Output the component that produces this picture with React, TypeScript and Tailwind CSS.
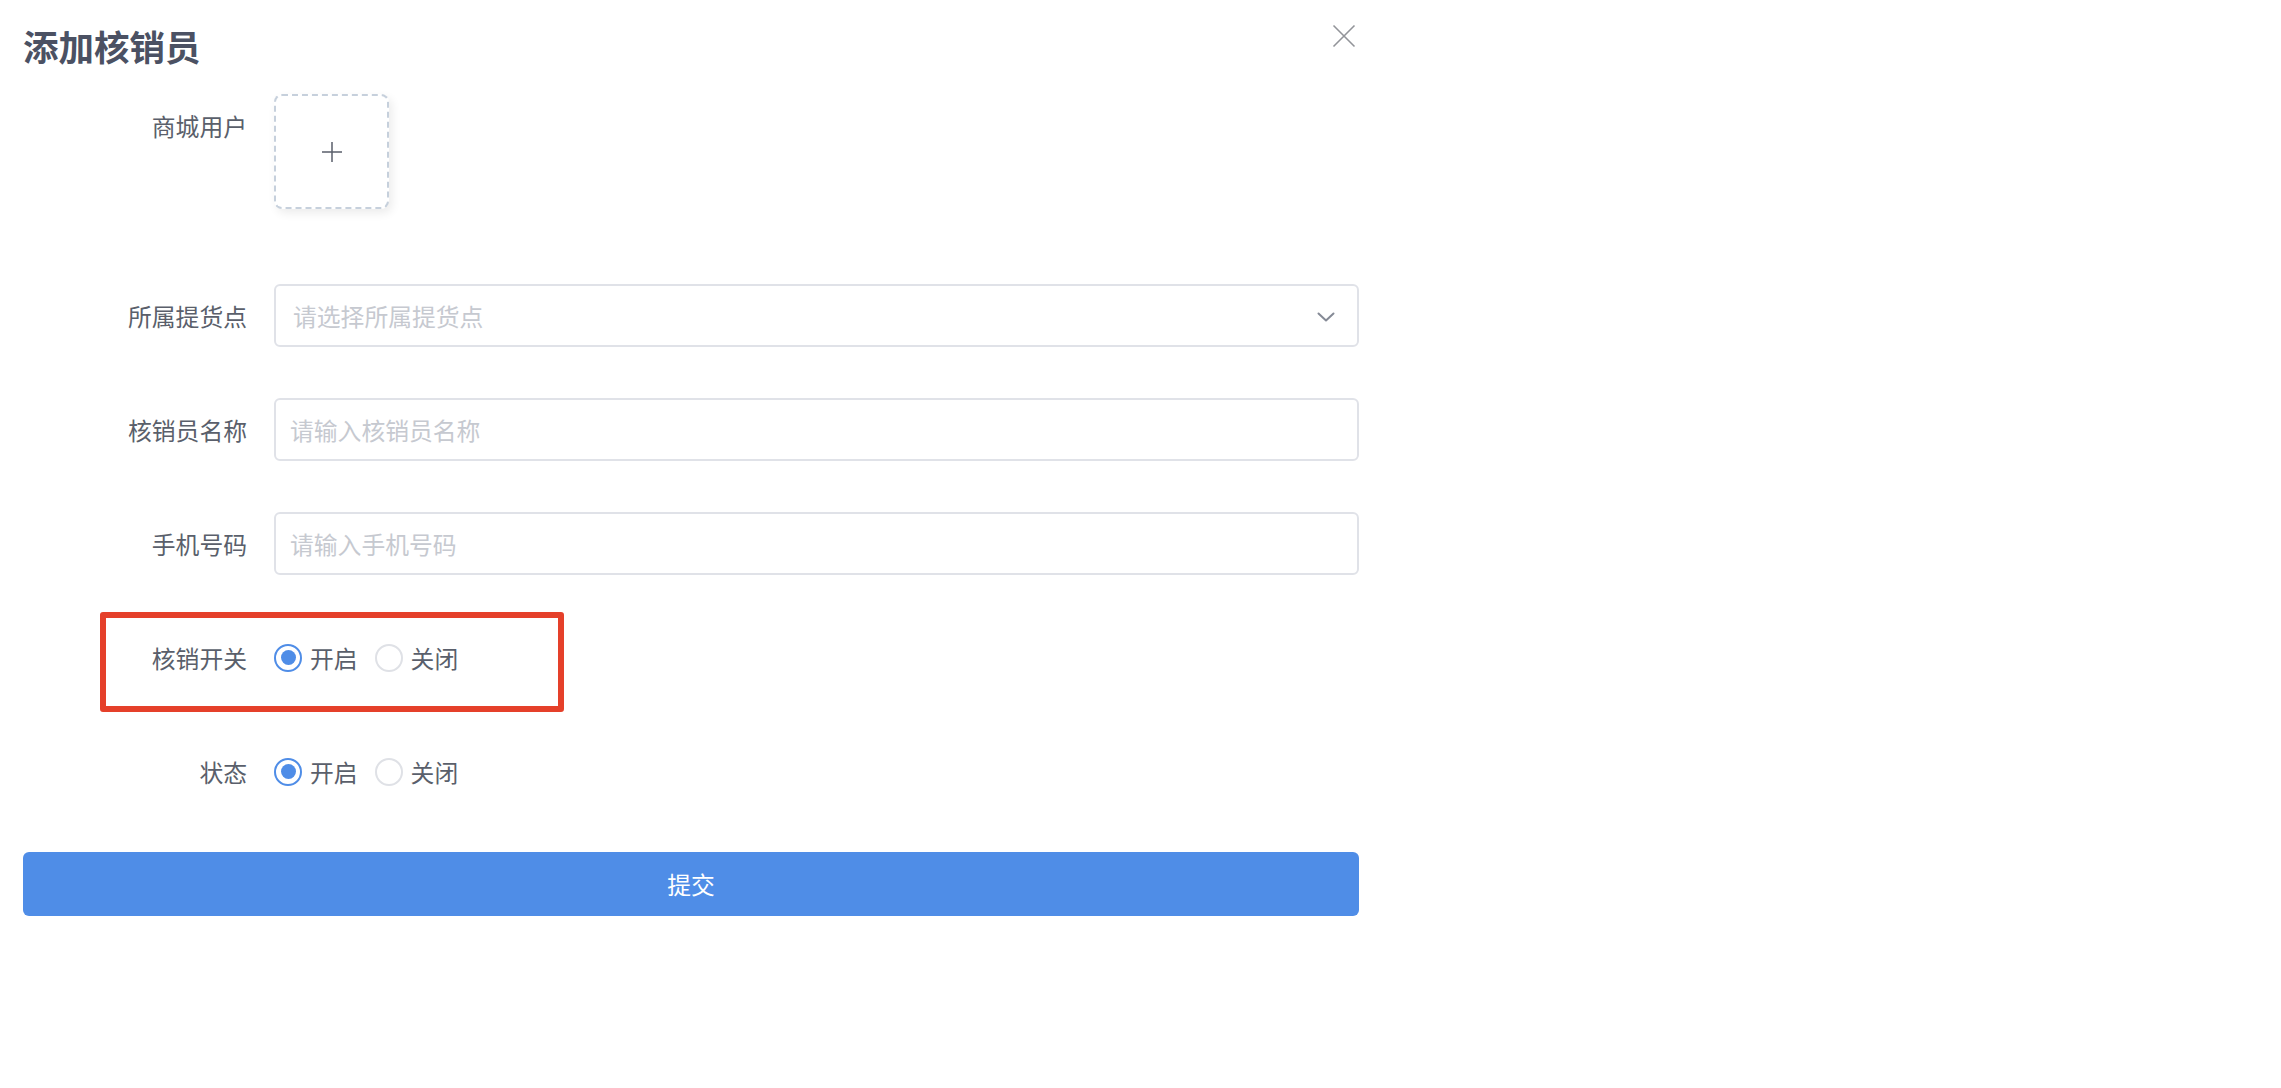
import React from 'react';

const label = 'w-[251px] shrink-0 pr-[27px] text-right leading-[63px] text-[23.8px] text-[#5a5f6b]';

function Radio({ checked, text }: { checked?: boolean; text: string }) {
  return (
    <label className="flex items-center cursor-pointer">
      <span
        className={
          checked
            ? 'flex h-[28px] w-[28px] items-center justify-center rounded-full border-[2.5px] border-[#4f8de7] bg-white'
            : 'flex h-[28px] w-[28px] items-center justify-center rounded-full border-2 border-[#dfe1e6] bg-white'
        }
      >
        {checked && <span className="h-[15px] w-[15px] rounded-full bg-[#4f8de7]" />}
      </span>
      <span className="ml-[8px] text-[23.8px] text-[#5a5f6b]">{text}</span>
    </label>
  );
}

function Field({ name, placeholder, select }: { name: string; placeholder: string; select?: boolean }) {
  return (
    <div className="mb-[51px] flex">
      <div className={label}>{name}</div>
      <div className="relative flex h-[63px] flex-1 items-center rounded-[6px] border-2 border-[#e0e2e8] bg-white">
        <input
          readOnly={select}
          placeholder={placeholder}
          className={
            select
              ? 'h-full w-full bg-transparent pl-[17px] pr-[60px] text-[23.8px] text-[#5a5f6b] outline-none placeholder:text-[#c6c9d0]'
              : 'h-full w-full bg-transparent pl-[14px] pr-[14px] text-[23.8px] text-[#5a5f6b] outline-none placeholder:text-[#c6c9d0]'
          }
        />
        {select && (
          <svg className="absolute right-[22px] top-[26px]" width="18" height="10" viewBox="0 0 18 10" fill="none">
            <polyline points="1.5,1.5 9,8.5 16.5,1.5" stroke="#858a96" strokeWidth="2" strokeLinecap="round" strokeLinejoin="round" />
          </svg>
        )}
      </div>
    </div>
  );
}

export default function App() {
  return (
    <div className="min-h-screen bg-white font-['Noto_Sans_CJK_SC','Noto_Sans',sans-serif]">
      <div className="relative w-[1382px] px-[23px] pt-[14px]">
        <button className="absolute left-[1332px] top-[24px] h-[24px] w-[24px]" aria-label="close">
          <svg width="24" height="24" viewBox="0 0 24 24" fill="none">
            <path d="M1.5 1.5 L22.5 22.5 M22.5 1.5 L1.5 22.5" stroke="#929499" strokeWidth="1.6" />
          </svg>
        </button>

        <h1 className="mb-[17px] text-[35.5px] font-bold leading-[63px] text-[#4b5163]">添加核销员</h1>

        <div className="mb-[75px] flex">
          <div className={label}>商城用户</div>
          <div className="flex h-[115px] w-[115px] items-center justify-center rounded-[8px] border-2 border-dashed border-[#c6d0dc] bg-white shadow-[3px_4px_10px_rgba(0,0,0,0.08)]">
            <svg width="22" height="22" viewBox="0 0 22 22" fill="none">
              <path d="M11 1 V21 M1 11 H21" stroke="#5a5f6b" strokeWidth="1.5" />
            </svg>
          </div>
        </div>

        <Field name="所属提货点" placeholder="请选择所属提货点" select />
        <Field name="核销员名称" placeholder="请输入核销员名称" />
        <Field name="手机号码" placeholder="请输入手机号码" />

        <div className="relative mb-[51px] flex h-[63px] items-center">
          <div className={label}>核销开关</div>
          <div className="flex items-center gap-[17px]">
            <Radio checked text="开启" />
            <Radio text="关闭" />
          </div>
          <div className="pointer-events-none absolute left-[77px] top-[-14px] h-[100px] w-[464px] rounded-[3px] border-[6px] border-[#e5402a]" />
        </div>

        <div className="mb-[49px] flex h-[63px] items-center">
          <div className={label}>状态</div>
          <div className="flex items-center gap-[17px]">
            <Radio checked text="开启" />
            <Radio text="关闭" />
          </div>
        </div>

        <button className="h-[64px] w-full rounded-[6px] bg-[#4f8de7] text-[23.8px] text-white">提交</button>
      </div>
    </div>
  );
}
